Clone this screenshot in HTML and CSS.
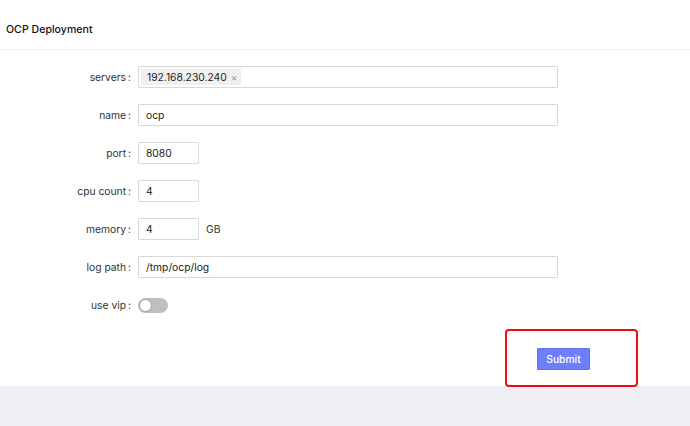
FILE: index.html
```html
<!DOCTYPE html>
<html>
<head>
<meta charset="utf-8">
<link rel="stylesheet" href="styles.css">
</head>
<body>
<div class="page">
  <header class="header">OCP Deployment</header>
  <main class="content">
    <form class="form">
      <div class="row">
        <label class="label">servers</label>
        <div class="input wide tags"><span class="tag">192.168.230.240 <span class="close">×</span></span></div>
      </div>
      <div class="row">
        <label class="label">name</label>
        <div class="input wide">ocp</div>
      </div>
      <div class="row">
        <label class="label">port</label>
        <div class="input short">8080</div>
      </div>
      <div class="row">
        <label class="label">cpu count</label>
        <div class="input short">4</div>
      </div>
      <div class="row">
        <label class="label">memory</label>
        <div class="input short">4</div>
        <span class="unit">GB</span>
      </div>
      <div class="row">
        <label class="label">log path</label>
        <div class="input wide">/tmp/ocp/log</div>
      </div>
      <div class="row">
        <label class="label">use vip</label>
        <span class="switch"><span class="knob"></span></span>
      </div>
    </form>
    <div class="actions">
      <button class="submit" type="button">Submit</button>
      <span class="highlight"></span>
    </div>
  </main>
  <footer class="footer"></footer>
</div>
</body>
</html>
```
FILE: styles.css
```css
* { box-sizing: border-box; }
html, body { margin: 0; padding: 0; background: #fff; }
body {
  font-family: Inter, "Liberation Sans", Arial, sans-serif;
  color: #1f1f1f;
  font-size: 10.3px;
}
.page { width: 690px; height: 426px; display: flex; flex-direction: column; }
.header {
  height: 50px;
  padding: 23px 0 0 6px;
  font-size: 10.6px;
  font-weight: 500;
  color: #111;
  border-bottom: 1px solid #f0f0f0;
}
.content { padding-top: 16px; flex: none; }
.form { display: flex; flex-direction: column; gap: 16px; }
.row { display: flex; align-items: center; height: 22px; }
.label {
  width: 131px;
  text-align: right;
  margin-right: 7px;
  color: #333;
}
.label::after { content: ":"; margin-left: 2px; }
.input {
  height: 22px;
  border: 1px solid #d9d9d9;
  border-radius: 1px;
  padding: 0 7px;
  display: flex;
  align-items: center;
  color: #222;
}
.wide { width: 420px; }
.short { width: 61px; }
.tags { padding: 0 2px; }
.tag {
  background: #f0f0f0;
  height: 16px;
  line-height: 16px;
  padding: 0 4px 0 6px;
  border-radius: 1px;
  color: #222;
}
.close { color: #999; font-size: 10px; margin-left: 1px; }
.unit { margin-left: 7px; color: #333; }
.switch {
  width: 30px;
  height: 15px;
  border-radius: 8px;
  background: #bfbfbf;
  display: flex;
  align-items: center;
  padding: 0 1px;
}
.knob {
  width: 13px;
  height: 13px;
  border-radius: 50%;
  background: #fff;
  border: 1px solid #a0a0a0;
}
.actions {
  position: relative;
  height: 70px;
  padding: 32px 0 0 537px;
}
.submit {
  width: 53px;
  height: 22px;
  background: #6f7ffb;
  border: 1px solid #5f6ff0;
  border-radius: 1px;
  color: #fff;
  font-family: Inter, "Liberation Sans", Arial, sans-serif;
  font-size: 10.3px;
  font-weight: 500;
  padding: 0;
}
.highlight {
  position: absolute;
  left: 505px;
  top: 13px;
  width: 133px;
  height: 58px;
  border: 2px solid #f20d0d;
  border-radius: 4px;
}
.footer { flex: 1; background: #efeff3; }
```
